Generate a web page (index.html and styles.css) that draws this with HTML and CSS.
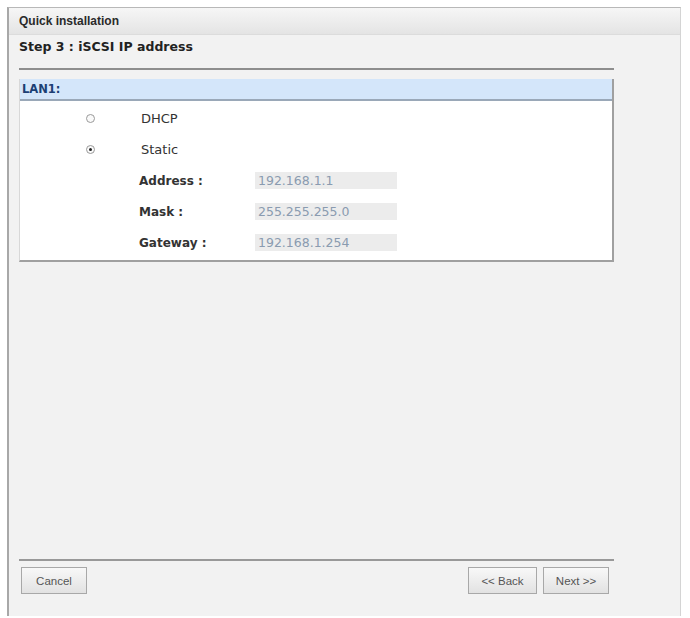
FILE: index.html
```html
<!DOCTYPE html>
<html>
<head>
<meta charset="utf-8">
<link rel="stylesheet" href="styles.css">
</head>
<body>
<div class="window">
  <div class="titlebar">Quick installation</div>
  <div class="content">
    <div class="step">Step 3 : iSCSI IP address</div>
    <div class="panel">
      <div class="panel-head">LAN1:</div>
      <div class="panel-body">
        <div class="radio-row">
          <span class="radio"></span><span class="radio-label">DHCP</span>
        </div>
        <div class="radio-row">
          <span class="radio checked"></span><span class="radio-label">Static</span>
        </div>
        <div class="field-row">
          <span class="field-label">Address :</span><span class="field-value">192.168.1.1</span>
        </div>
        <div class="field-row">
          <span class="field-label">Mask :</span><span class="field-value">255.255.255.0</span>
        </div>
        <div class="field-row">
          <span class="field-label">Gateway :</span><span class="field-value">192.168.1.254</span>
        </div>
      </div>
    </div>
    <div class="spacer"></div>
    <div class="footer">
      <button class="btn btn-cancel">Cancel</button>
      <div class="nav">
        <button class="btn btn-back">&lt;&lt; Back</button>
        <button class="btn btn-next">Next &gt;&gt;</button>
      </div>
    </div>
  </div>
</div>
</body>
</html>
```

FILE: styles.css
```css
html, body {
  margin: 0;
  padding: 0;
  background: #ffffff;
}
body {
  padding: 7px 0 0 7px;
  font-family: "DejaVu Sans", Verdana, sans-serif;
}
.window {
  width: 674px;
  height: 609px;
  border-left: 2px solid #a8a8a8;
  border-top: 1px solid #b8b8b8;
  border-right: 1px solid #d4d4d4;
  background: #f2f2f2;
  display: flex;
  flex-direction: column;
  box-sizing: border-box;
}
.titlebar {
  height: 27px;
  flex: none;
  background: linear-gradient(#f6f6f6, #e4e4e4);
  border-bottom: 1px solid #dcdcdc;
  font-family: "Liberation Sans", Arial, sans-serif;
  font-weight: bold;
  font-size: 12px;
  color: #2a2a2a;
  display: flex;
  align-items: center;
  padding-left: 10px;
  box-sizing: border-box;
}
.content {
  flex: 1;
  display: flex;
  flex-direction: column;
  padding: 0 0 0 10px;
  width: 595px;
  box-sizing: content-box;
}
.step {
  font-size: 12.5px;
  line-height: 14px;
  font-weight: bold;
  color: #222;
  height: 35px;
  border-bottom: 2px solid #8e8e8e;
  padding-top: 5px;
  box-sizing: border-box;
}
.panel {
  margin-top: 9px;
  background: #ffffff;
  border-right: 2px solid #a0a0a0;
  border-bottom: 2px solid #a0a0a0;
  border-left: 1px solid #d8d8d8;
  height: 183px;
  box-sizing: border-box;
}
.panel-head {
  height: 20px;
  background: #d4e6fa;
  border-bottom: 2px solid #9aa8b8;
  font-size: 11.5px;
  font-weight: bold;
  color: #1c3f74;
  display: flex;
  align-items: center;
  padding-left: 2px;
}
.panel-body {
  padding-top: 2px;
  display: flex;
  flex-direction: column;
}
.radio-row {
  height: 31px;
  display: flex;
  align-items: center;
}
.radio {
  width: 9px;
  height: 9px;
  border: 1px solid #9a9a9a;
  border-radius: 50%;
  margin-left: 66px;
  box-sizing: border-box;
  position: relative;
  background: #fafafa;
}
.radio.checked::after {
  content: "";
  position: absolute;
  left: 2px;
  top: 2px;
  width: 3px;
  height: 3px;
  border-radius: 50%;
  background: #222;
}
.radio-label {
  margin-left: 46px;
  font-size: 13px;
  color: #333;
}
.field-row {
  height: 31px;
  display: flex;
  align-items: center;
}
.field-label {
  margin-left: 119px;
  width: 116px;
  font-size: 12px;
  font-weight: bold;
  color: #333;
}
.field-value {
  width: 142px;
  height: 17px;
  background: #ececec;
  font-size: 12.5px;
  color: #8a9bb0;
  display: flex;
  align-items: center;
  padding-left: 3px;
  box-sizing: border-box;
}
.spacer {
  flex: 1;
}
.footer {
  border-top: 2px solid #999;
  height: 57px;
  display: flex;
  justify-content: space-between;
  align-items: flex-start;
  padding-top: 6px;
  box-sizing: border-box;
}
.nav {
  display: flex;
  gap: 6px;
  margin-right: 5px;
}
.btn {
  font-family: "Liberation Sans", Arial, sans-serif;
  font-size: 11.5px;
  color: #555;
  height: 27px;
  background: linear-gradient(#f8f8f8, #e2e2e2);
  border: 1px solid #a8a8a8;
  border-radius: 0;
  padding: 0;
  margin: 0;
}
.btn-cancel {
  width: 66px;
  margin-left: 2px;
}
.btn-back {
  width: 69px;
}
.btn-next {
  width: 66px;
}
```
